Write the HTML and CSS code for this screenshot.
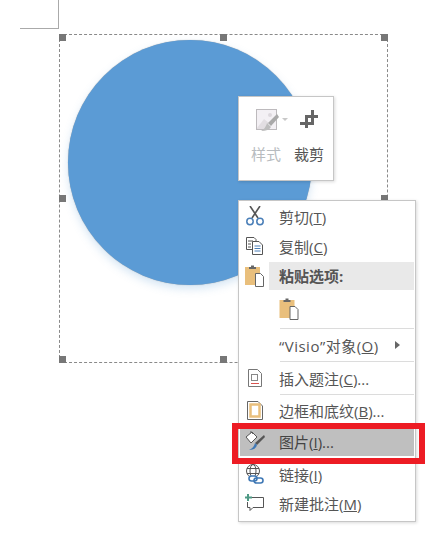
FILE: index.html
```html
<!DOCTYPE html>
<html lang="zh">
<head>
<meta charset="utf-8">
<title>图片右键菜单</title>
<link rel="stylesheet" href="styles.css">
</head>
<body>
<div class="canvas">
  <div class="margin-mark"></div>

  <div class="selection">
    <div class="circle"></div>
    <i class="handle h-tl"></i><i class="handle h-tm"></i><i class="handle h-tr"></i>
    <i class="handle h-ml"></i><i class="handle h-mr"></i>
    <i class="handle h-bl"></i><i class="handle h-bm"></i><i class="handle h-br"></i>
  </div>

  <div class="toolbar">
    <div class="tool">
      <div class="tool-icon">
        <svg class="style-ico" width="32" height="22" viewBox="0 0 32 22">
          <rect x="0.5" y="0.5" width="20" height="20" fill="#f3f0f4" stroke="#bdbabd"/>
          <circle cx="14" cy="6" r="2" fill="#ddd8dd"/>
          <path d="M1 19 L8 10 L13 14 L9 20 H1 Z" fill="#e2dee2"/>
          <path d="M21 5 L23 8 L15 17 L12 14 Z" fill="#a9a9a9"/>
          <path d="M11 14 L15 18 Q13 22 5 22 Q10 19 11 14 Z" fill="#bdbdbd"/>
          <path d="M26 9 H32 L29 12 Z" fill="#c8c8c8"/>
        </svg>
      </div>
      <span class="tool-label muted">样式</span>
    </div>
    <div class="tool">
      <div class="tool-icon">
        <svg width="18" height="18" viewBox="0 0 18 18">
          <path d="M12.5 0 V13.5 H0 M6.5 18 V6.5 H18" fill="none" stroke="#666" stroke-width="3"/>
        </svg>
      </div>
      <span class="tool-label">裁剪</span>
    </div>
  </div>

  <div class="menu">
    <div class="row tall lift">
      <span class="ico">
        <svg width="18" height="20" viewBox="0 0 18 20"><path d="M4 0 L12 12 M14 0 L6 12" stroke="#555" stroke-width="1.6" fill="none"/><circle cx="4" cy="15.5" r="3.2" fill="none" stroke="#4a7fb8" stroke-width="1.5"/><circle cx="14" cy="15.5" r="3.2" fill="none" stroke="#4a7fb8" stroke-width="1.5"/></svg>
      </span>
      <span class="txt">剪切(<u>T</u>)</span>
    </div>
    <div class="row tall lift">
      <span class="ico">
        <svg width="20" height="20" viewBox="0 0 20 20"><path d="M1.5 1.5 H9 L11 3.5 V5 M1.5 1.5 V13.5 H7" fill="#fff" stroke="#555"/><path d="M3 5 H8 M3 8 H6 M3 11 H6" stroke="#555"/><path d="M7.5 5.5 H14 L17.5 9 V18.5 H7.5 Z" fill="#fff" stroke="#555"/><path d="M9.5 10 H15.5 M9.5 12.5 H15.5 M9.5 15 H15.5" stroke="#4a7fb8"/></svg>
      </span>
      <span class="txt">复制(<u>C</u>)</span>
    </div>
    <div class="row heading">
      <span class="ico">
        <svg width="20" height="24" viewBox="0 0 20 24"><use href="#paste"/></svg>
      </span>
      <span class="txt bar">粘贴选项:</span>
    </div>
    <div class="row paste">
      <span class="ico"></span>
      <svg class="paste-opt" width="21" height="24" viewBox="0 0 20 24">
        <g id="paste">
          <rect x="0" y="3" width="15" height="18" fill="#e9bf7c"/>
          <path d="M4 3 H6 V1.5 H9 V3 H11 V5 H4 Z" fill="#666"/>
          <path d="M10.5 9.5 H15.5 L18.5 12.5 V22.5 H10.5 Z" fill="#fff" stroke="#666"/>
        </g>
      </svg>
    </div>
    <hr class="sep">
    <div class="row mid">
      <span class="ico"></span>
      <span class="txt visio">“Visio”对象(<u>O</u>)</span>
      <span class="arrow"></span>
    </div>
    <hr class="sep">
    <div class="row mid">
      <span class="ico">
        <svg width="14" height="18" viewBox="0 0 14 18"><path d="M.5 .5 H9.5 L13.5 4.5 V17.5 H.5 Z" fill="#fff" stroke="#777"/><rect x="3.5" y="5.5" width="6" height="6" fill="none" stroke="#888"/><path d="M3 14.5 H11" stroke="#d9534f"/></svg>
      </span>
      <span class="txt">插入题注(<u>C</u>)...</span>
    </div>
    <hr class="sep">
    <div class="row mid lift">
      <span class="ico">
        <svg width="16" height="19" viewBox="0 0 16 19"><path d="M.5 .5 H11 L15.5 5 V18.5 H.5 Z" fill="#fff" stroke="#666"/><rect x="3.5" y="3.5" width="9" height="12" fill="none" stroke="#e9bf7c" stroke-width="2.5"/></svg>
      </span>
      <span class="txt">边框和底纹(<u>B</u>)...</span>
    </div>
    <div class="row active lift">
      <span class="ico">
        <svg width="22" height="20" viewBox="0 0 22 20"><path d="M2 6 L8 1 L13 6 L7 12 Z" fill="#fff" stroke="#555"/><path d="M6 1 Q8 0 9 3" fill="none" stroke="#555"/><path d="M20 4 L21 6 L13 14 L11 12 Z" fill="#555"/><path d="M11 12 L13 14 Q12 19 5 19 Q10 17 11 12 Z" fill="#3f78b5"/></svg>
      </span>
      <span class="txt">图片(<u>I</u>)...</span>
    </div>
    <div class="row tall after">
      <span class="ico">
        <svg width="20" height="22" viewBox="0 0 20 22"><circle cx="8" cy="8" r="6.5" fill="none" stroke="#555"/><ellipse cx="8" cy="8" rx="3" ry="6.5" fill="none" stroke="#555"/><path d="M2 5.5 H14 M2 10.5 H14" stroke="#555"/><rect x="4" y="13" width="8" height="5" rx="2.5" fill="#fff" stroke="#3f78b5" stroke-width="1.6"/><rect x="9" y="15" width="9" height="5" rx="2.5" fill="none" stroke="#3f78b5" stroke-width="1.6"/></svg>
      </span>
      <span class="txt">链接(<u>I</u>)</span>
    </div>
    <div class="row tall lift">
      <span class="ico">
        <svg width="20" height="18" viewBox="0 0 20 18"><path d="M6 3.5 H18.5 V13.5 H8 L5 16.5 V13.5 H2.5 V8" fill="#fff" stroke="#555"/><path d="M3 0 V7 M0 3.5 H7" stroke="#4f9a85" stroke-width="2"/></svg>
      </span>
      <span class="txt">新建批注(<u>M</u>)</span>
    </div>
  </div>

  <div class="redbox"></div>
</div>
</body>
</html>
```

FILE: styles.css
```css
html, body {
  margin: 0;
  padding: 0;
  background: #fff;
}

.canvas {
  position: relative;
  width: 445px;
  height: 538px;
  overflow: hidden;
  font-family: "Open Sans", "Noto Sans CJK SC", sans-serif;
  color: #555;
}

.margin-mark {
  position: absolute;
  left: 20px;
  top: 0;
  width: 38px;
  height: 28px;
  border-right: 1px solid #aaa;
  border-bottom: 1px solid #aaa;
}

.selection {
  position: absolute;
  left: 59px;
  top: 34px;
  width: 327px;
  height: 327px;
  border: 1px dashed #8a8a8a;
}

.circle {
  position: absolute;
  left: 8px;
  top: 5px;
  width: 244px;
  height: 245px;
  border-radius: 50%;
  background: #5b9bd5;
  box-shadow: 0 0 1px 0 #9a9a9a, 0 4px 8px rgba(91, 155, 213, 0.25);
}

.handle {
  position: absolute;
  width: 7px;
  height: 7px;
  background: #777;
}
.h-tl { left: -1px; top: -1px; }
.h-tm { left: 160px; top: -1px; }
.h-tr { left: 321px; top: -1px; }
.h-ml { left: -1px; top: 160px; }
.h-mr { left: 321px; top: 160px; }
.h-bl { left: -1px; top: 321px; }
.h-bm { left: 160px; top: 321px; }
.h-br { left: 321px; top: 321px; }

.toolbar {
  position: absolute;
  left: 238px;
  top: 96px;
  box-sizing: border-box;
  width: 96px;
  height: 85px;
  display: flex;
  justify-content: center;
  gap: 13px;
  padding: 11px 0 0 3px;
  background: #fff;
  border: 1px solid #c6c6c6;
  box-shadow: 1px 1px 3px rgba(0, 0, 0, 0.15);
}

.tool {
  display: flex;
  flex-direction: column;
  align-items: center;
  width: 30px;
}

.tool-icon {
  height: 22px;
  display: flex;
  align-items: center;
  justify-content: center;
  margin-bottom: 14px;
}

.style-ico {
  flex: none;
  margin: 2px 0 0 12px;
}

.tool-label {
  font-size: 15px;
  line-height: 20px;
  white-space: nowrap;
}

.muted {
  color: #b8bcc0;
}

.menu {
  position: absolute;
  left: 238px;
  top: 200px;
  box-sizing: border-box;
  width: 178px;
  height: 322px;
  padding: 1px;
  background: #fff;
  border: 1px solid #c6c6c6;
  box-shadow: 1px 1px 3px rgba(0, 0, 0, 0.15);
  display: flex;
  flex-direction: column;
}

.row {
  box-sizing: border-box;
  display: flex;
  align-items: center;
  flex: none;
  font-size: 15px;
}

.lift {
  padding-bottom: 2px;
}

.ico {
  flex: none;
  width: 29px;
  margin-right: 10px;
  display: flex;
  justify-content: center;
}

.txt {
  white-space: nowrap;
}

.visio {
  letter-spacing: 0.5px;
}

.tall { height: 30px; }
.mid { height: 32px; }

.heading { height: 28px; }
.heading .ico { margin-right: 0; }
.heading .bar {
  flex: 1;
  align-self: stretch;
  display: flex;
  align-items: center;
  padding: 0 0 2px 10px;
  background: #e9e9e9;
  font-weight: 700;
}

.paste { height: 38px; }
.paste-opt { flex: none; }

.sep {
  flex: none;
  margin: 0 0 0 40px;
  height: 1px;
  border: 0;
  background: #dcdcdc;
}

.arrow {
  margin-left: auto;
  margin-right: 14px;
  border-left: 5px solid #666;
  border-top: 4px solid transparent;
  border-bottom: 4px solid transparent;
}

.active {
  height: 28px;
  margin-top: 1px;
  background: #bfbfbf;
  color: #444;
}

.after { margin-top: 3px; }

.redbox {
  position: absolute;
  left: 232px;
  top: 423px;
  box-sizing: border-box;
  width: 193px;
  height: 41px;
  border: 6px solid #ed1c24;
}
```
